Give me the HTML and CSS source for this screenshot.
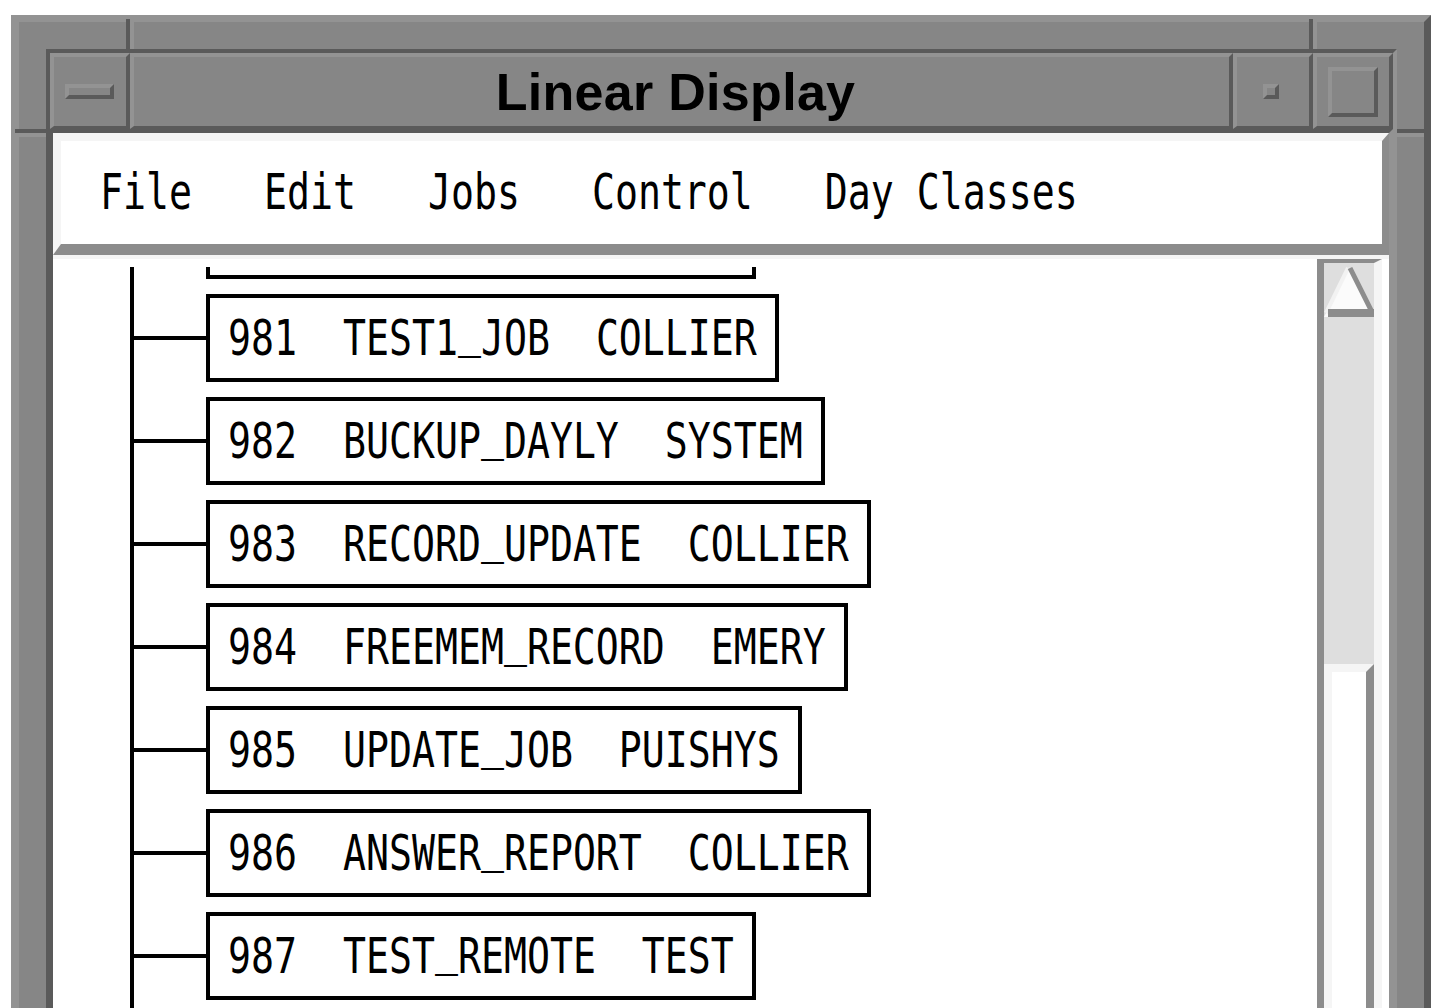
FILE: index.html
```html
<!DOCTYPE html>
<html lang="en">
<head>
<meta charset="utf-8">
<title>Linear Display</title>
<link rel="stylesheet" href="styles.css">
</head>
<body>
<div class="window">
  <div class="notch notch-tl"></div>
  <div class="notch notch-tr"></div>
  <div class="notch notch-l"></div>
  <div class="notch notch-r"></div>
  <div class="client">
    <div class="titlebar">
      <div class="tb-btn"><span class="ico-min"></span></div>
      <div class="tb-title"><span class="title-text">Linear Display</span></div>
      <div class="tb-btn"><span class="ico-icon"></span></div>
      <div class="tb-btn"><span class="ico-max"></span></div>
    </div>
    <div class="client-body">
      <div class="menubar">
        <div class="menu-item"><span class="mono">File</span></div>
        <div class="menu-item"><span class="mono">Edit</span></div>
        <div class="menu-item"><span class="mono">Jobs</span></div>
        <div class="menu-item"><span class="mono">Control</span></div>
        <div class="menu-item"><span class="mono">Day Classes</span></div>
      </div>
      <div class="content">
        <div class="canvas">
          <div class="viewport">
            <div class="tree">
              <div class="row"><div class="stub"></div><div class="job job-partial"></div></div>
              <div class="row"><div class="stub"></div><div class="job"><span class="mono">981  TEST1<span class="u">_</span>JOB  COLLIER</span></div></div>
              <div class="row"><div class="stub"></div><div class="job"><span class="mono">982  BUCKUP<span class="u">_</span>DAYLY  SYSTEM</span></div></div>
              <div class="row"><div class="stub"></div><div class="job"><span class="mono">983  RECORD<span class="u">_</span>UPDATE  COLLIER</span></div></div>
              <div class="row"><div class="stub"></div><div class="job"><span class="mono">984  FREEMEM<span class="u">_</span>RECORD  EMERY</span></div></div>
              <div class="row"><div class="stub"></div><div class="job"><span class="mono">985  UPDATE<span class="u">_</span>JOB  PUISHYS</span></div></div>
              <div class="row"><div class="stub"></div><div class="job"><span class="mono">986  ANSWER<span class="u">_</span>REPORT  COLLIER</span></div></div>
              <div class="row"><div class="stub"></div><div class="job"><span class="mono">987  TEST<span class="u">_</span>REMOTE  TEST</span></div></div>
              <div class="tree-tail"></div>
            </div>
          </div>
        </div>
        <div class="scrollbar">
          <div class="sb-arrow">
            <svg width="50" height="54" viewBox="0 0 50 54">
              <polygon points="25,4 0,54 50,54" fill="#fbfbfb"/>
              <line x1="24" y1="5" x2="2" y2="50" stroke="#f2f2f2" stroke-width="4"/>
              <line x1="26" y1="5" x2="48" y2="49" stroke="#8c8c8c" stroke-width="5"/>
              <rect x="4" y="46" width="46" height="8" fill="#8c8c8c"/>
            </svg>
          </div>
          <div class="sb-gap"></div>
          <div class="sb-thumb"></div>
        </div>
      </div>
    </div>
  </div>
</div>
</body>
</html>
```

FILE: styles.css
```css
html, body {
  margin: 0;
  padding: 0;
  overflow: hidden;
  background: #ffffff;
}

.window {
  position: relative;
  margin: 15px 0 0 11px;
  width: 1420px;
  box-sizing: border-box;
  height: 1100px;
  background: #868686;
  border-top: 7px solid #939393;
  border-left: 8px solid #939393;
  border-right: 7px solid #5a5a5a;
  padding: 27px 27px 0 27px;
}

.notch {
  position: absolute;
}
.notch-tl, .notch-tr {
  top: -3px;
  width: 4px;
  height: 30px;
  background: #5a5a5a;
  border-right: 4px solid #939393;
}
.notch-tl { left: 107px; }
.notch-tr { left: 1290px; }
.notch-l, .notch-r {
  top: 107px;
  height: 4px;
  background: #5a5a5a;
  border-bottom: 4px solid #939393;
}
.notch-l { left: -4px; width: 31px; }
.notch-r { left: 1378px; width: 27px; }

.client {
  border-left: 4px solid #5a5a5a;
  border-top: 4px solid #5a5a5a;
  border-right: 4px solid #939393;
  height: 1100px;
}

.titlebar {
  display: flex;
  height: 76px;
}
.tb-btn, .tb-title {
  box-sizing: border-box;
  height: 76px;
  border-top: 4px solid #939393;
  border-left: 4px solid #939393;
  border-right: 4px solid #5a5a5a;
  border-bottom: 3px solid #5a5a5a;
  display: flex;
  align-items: center;
  justify-content: center;
}
.tb-btn { width: 80px; }
.tb-title { flex: 1; padding-right: 12px; }

.title-text {
  font-family: "Liberation Sans", Arial, sans-serif;
  font-weight: bold;
  font-size: 52px;
  color: #000;
  letter-spacing: 0.3px;
  line-height: 1;
}

.ico-min, .ico-icon, .ico-max {
  display: block;
  box-sizing: border-box;
  border-top: 4px solid #939393;
  border-left: 4px solid #939393;
  border-right: 4px solid #5a5a5a;
  border-bottom: 4px solid #5a5a5a;
}
.ico-min { width: 49px; height: 15px; margin-left: -1px; }
.ico-icon { width: 16px; height: 15px; margin-left: -4px; }
.ico-max { width: 50px; height: 50px; }

.client-body {
  border-top: 4px solid #5a5a5a;
  border-left: 3px solid #5a5a5a;
  border-right: 4px solid #939393;
  background: #ffffff;
}

.mono {
  display: inline-block;
  font-family: "DejaVu Sans Mono", monospace;
  font-size: 38.2px;
  line-height: 1;
  white-space: pre;
  color: #000;
  transform: scaleY(1.29);
}
.u {
  position: relative;
  top: -7px;
}

.menubar {
  display: flex;
  align-items: center;
  height: 103px;
  background: #ffffff;
  border-top: 8px solid #f5f5f5;
  border-left: 8px solid #f5f5f5;
  border-right: 7px solid #8c8c8c;
  border-bottom: 11px solid #8c8c8c;
  padding-left: 3px;
}
.menu-item {
  padding: 0 36px;
}

.content {
  display: flex;
  height: 800px;
  border-top: 4px solid #f5f5f5;
  padding-right: 7px;
  background: #ffffff;
}

.canvas {
  flex: 1;
  padding-top: 8px;
  display: flex;
  flex-direction: column;
}
.viewport {
  flex: 1;
  overflow: hidden;
}
.tree {
  margin-top: -76px;
  margin-left: 77px;
  border-left: 4px solid #000;
}
.tree-tail {
  height: 60px;
}
.row {
  display: flex;
  align-items: center;
  margin-bottom: 15px;
}
.stub {
  width: 72px;
  height: 4px;
  background: #000;
}
.job {
  box-sizing: border-box;
  height: 88px;
  border: 4px solid #000;
  padding: 0 18px;
  display: flex;
  align-items: center;
  background: #fff;
}
.job-partial {
  width: 550px;
}

.scrollbar {
  width: 65px;
  box-sizing: border-box;
  display: flex;
  flex-direction: column;
  background: #dedede;
  border-left: 7px solid #8c8c8c;
  border-top: 4px solid #8c8c8c;
  border-right: 8px solid #f5f5f5;
}
.sb-arrow {
  height: 54px;
}
.sb-arrow svg {
  display: block;
}
.sb-gap {
  height: 347px;
}
.sb-thumb {
  flex: 1;
  background: #ffffff;
  border-top: 8px solid #f5f5f5;
  border-left: 8px solid #f5f5f5;
  border-right: 8px solid #8c8c8c;
}
```
